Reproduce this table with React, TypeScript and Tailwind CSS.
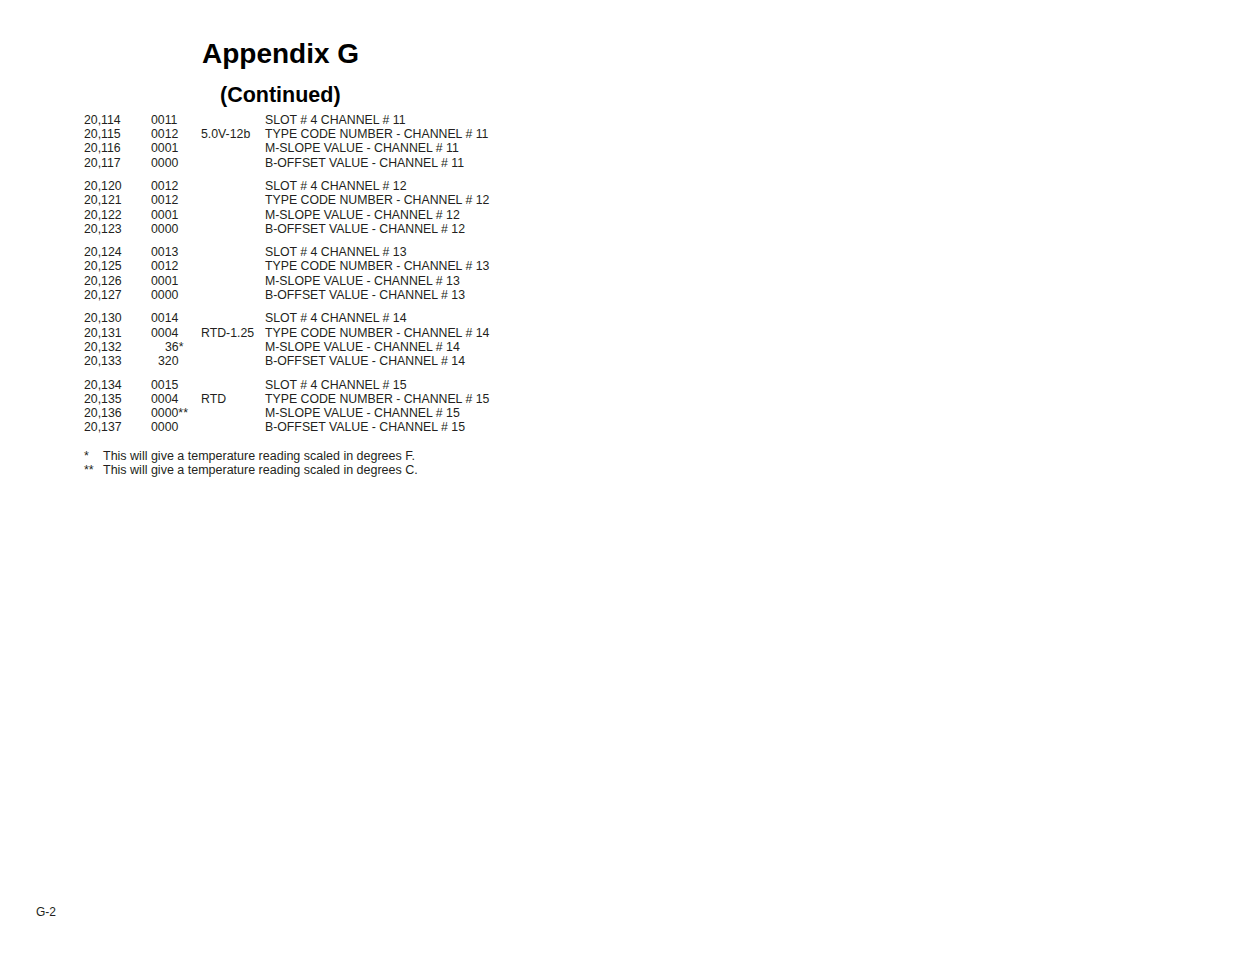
const groups = [
  {
    rows: [
      ['20,114', '0011', '', 'SLOT # 4 CHANNEL # 11'],
      ['20,115', '0012', '5.0V-12b', 'TYPE CODE NUMBER - CHANNEL # 11'],
      ['20,116', '0001', '', 'M-SLOPE VALUE - CHANNEL # 11'],
      ['20,117', '0000', '', 'B-OFFSET VALUE - CHANNEL # 11'],
    ],
  },
  {
    rows: [
      ['20,120', '0012', '', 'SLOT # 4 CHANNEL # 12'],
      ['20,121', '0012', '', 'TYPE CODE NUMBER - CHANNEL # 12'],
      ['20,122', '0001', '', 'M-SLOPE VALUE - CHANNEL # 12'],
      ['20,123', '0000', '', 'B-OFFSET VALUE - CHANNEL # 12'],
    ],
  },
  {
    rows: [
      ['20,124', '0013', '', 'SLOT # 4 CHANNEL # 13'],
      ['20,125', '0012', '', 'TYPE CODE NUMBER - CHANNEL # 13'],
      ['20,126', '0001', '', 'M-SLOPE VALUE - CHANNEL # 13'],
      ['20,127', '0000', '', 'B-OFFSET VALUE - CHANNEL # 13'],
    ],
  },
  {
    rows: [
      ['20,130', '0014', '', 'SLOT # 4 CHANNEL # 14'],
      ['20,131', '0004', 'RTD-1.25', 'TYPE CODE NUMBER - CHANNEL # 14'],
      ['20,132', '36*', '', 'M-SLOPE VALUE - CHANNEL # 14'],
      ['20,133', '320', '', 'B-OFFSET VALUE - CHANNEL # 14'],
    ],
  },
  {
    rows: [
      ['20,134', '0015', '', 'SLOT # 4 CHANNEL # 15'],
      ['20,135', '0004', 'RTD', 'TYPE CODE NUMBER - CHANNEL # 15'],
      ['20,136', '0000**', '', 'M-SLOPE VALUE - CHANNEL # 15'],
      ['20,137', '0000', '', 'B-OFFSET VALUE - CHANNEL # 15'],
    ],
  },
];

// short values sit right-aligned under the 4-digit ones, asterisk hangs out
function valuePad(v: string) {
  if (v === '36*') return 'pl-[14px]';
  if (v === '320') return 'pl-[7px]';
  return '';
}

export default function App() {
  return (
    <div
      className="flex h-[954px] w-[1235px] flex-col bg-white text-[#231f20]"
      style={{ fontFamily: '"Liberation Sans", Arial, sans-serif' }}
    >
      <h1 className="pl-[202px] pt-[38px] text-[28px] font-bold leading-[32px] text-black">Appendix G</h1>
      <h2 className="mt-[13px] pl-[220px] text-[21.5px] font-bold leading-[24px] text-black">(Continued)</h2>

      <div className="mt-[6px] flex flex-col gap-[9.4px] pl-[84px] text-[12.3px]">
        {groups.map((g, gi) => (
          <div key={gi} className="flex flex-col">
            {g.rows.map((r) => (
              <div key={r[0]} className="flex h-[14.2px] items-center whitespace-nowrap leading-[14.2px]">
                <span className="w-[67px]">{r[0]}</span>
                <span className={`w-[50px] ${valuePad(r[1])}`}>{r[1]}</span>
                <span className="w-[64px]">{r[2]}</span>
                <span>{r[3]}</span>
              </div>
            ))}
          </div>
        ))}
      </div>

      <div className="mt-[15px] flex flex-col pl-[84px] text-[12.5px] leading-[14px]">
        <div className="flex">
          <span className="w-[19px]">*</span>
          <span>This will give a temperature reading scaled in degrees F.</span>
        </div>
        <div className="flex">
          <span className="w-[19px]">**</span>
          <span>This will give a temperature reading scaled in degrees C.</span>
        </div>
      </div>

      <div className="mt-auto pb-[35px] pl-[36px] text-[12px] leading-[14px]">G-2</div>
    </div>
  );
}
